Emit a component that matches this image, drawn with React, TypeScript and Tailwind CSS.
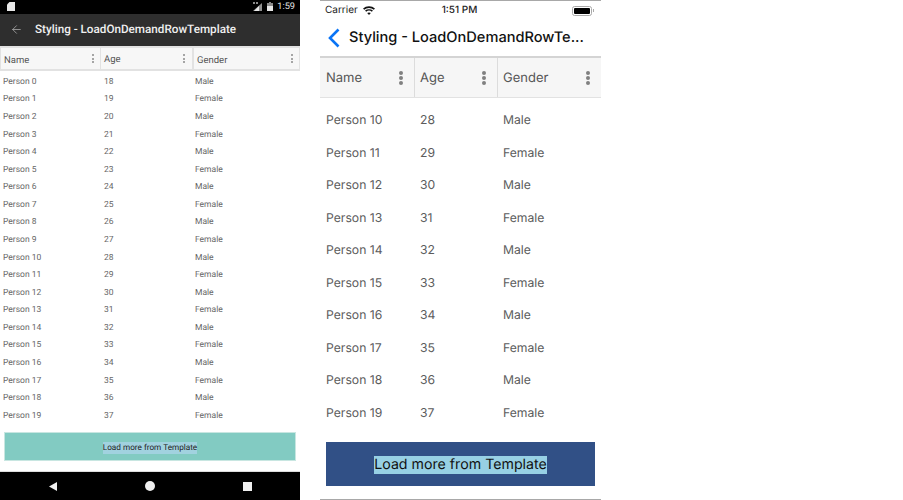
import React from "react";
import { ArrowLeft } from "lucide-react";

const androidRows = Array.from({ length: 20 }, (_, i) => ({
  name: `Person ${i}`,
  age: 18 + i,
  gender: i % 2 === 0 ? "Male" : "Female",
}));

const iosRows = androidRows.slice(10);

const Dots = () => (
  <div className="flex h-[9px] flex-col items-center justify-between">
    <span className="block h-[2px] w-[2px] rounded-full bg-[#8a8a8a]" />
    <span className="block h-[2px] w-[2px] rounded-full bg-[#8a8a8a]" />
    <span className="block h-[2px] w-[2px] rounded-full bg-[#8a8a8a]" />
  </div>
);

const IosDots = () => (
  <div className="flex h-[14px] flex-col items-center justify-between">
    <span className="block h-[4px] w-[4px] rounded-full bg-[#808080]" />
    <span className="block h-[4px] w-[4px] rounded-full bg-[#808080]" />
    <span className="block h-[4px] w-[4px] rounded-full bg-[#808080]" />
  </div>
);

const AndroidPhone = () => (
  <div className="flex h-[500px] w-[300px] flex-col bg-white font-['Roboto',sans-serif] [text-rendering:geometricPrecision]">
    {/* Status bar */}
    <div className="flex h-[14px] items-center justify-between bg-black pl-[7px] pr-[5px]">
      <svg width="8" height="9" viewBox="0 0 8 9">
        <path d="M2.5 0H8v9H0V2.5z" fill="#e8e8e8" />
      </svg>
      <div className="flex items-center">
        <svg width="9" height="9" viewBox="0 0 9 9">
          <path d="M0 0h2v2H0zM3 0h2v2H3z" fill="#8a8a8a" />
          <path d="M9 1v8H0z" fill="#8f8f8f" />
          <path d="M6 4v5H1z" fill="#e6e6e6" />
        </svg>
        <svg className="ml-[5px]" width="6" height="9" viewBox="0 0 6 9">
          <path d="M2 0h2v1h2v8H0V1h2z" fill="#8a8a8a" />
          <path d="M0 4h6v5H0z" fill="#e6e6e6" />
        </svg>
        <span className="ml-[4px] text-[9.2px] leading-none text-[#e4e4e4]">1:59</span>
      </div>
    </div>
    {/* App bar */}
    <div className="flex h-[33px] items-center bg-[#2e2e2e] pl-[10px]">
      <ArrowLeft size={13} strokeWidth={1.5} color="#a8a8a8" />
      <span className="ml-[12px] text-[11.7px] font-medium text-[#f0f0f0]">
        Styling - LoadOnDemandRowTemplate
      </span>
    </div>
    {/* Header */}
    <div className="grid h-[25px] grid-cols-[101px_93px_106px] border-y-2 border-[#e2e2e2] bg-[#f7f7f7] text-[9.5px] text-[#555]">
      <div className="flex items-center justify-between border-x border-[#e2e2e2] pl-[3px] pr-[6px]">
        <span className="translate-y-[3px]">Name</span>
        <Dots />
      </div>
      <div className="flex items-center justify-between border-r-2 border-[#e2e2e2] pl-[3px] pr-[7px]">
        <span className="translate-y-[2px]">Age</span>
        <Dots />
      </div>
      <div className="flex items-center justify-between border-r border-[#e2e2e2] pl-[3px] pr-[6px]">
        <span className="translate-y-[3px]">Gender</span>
        <Dots />
      </div>
    </div>
    {/* Rows */}
    <div className="flex flex-col pt-[1.5px] text-[8.5px] text-[#666]">
      {androidRows.map((row) => (
        <div key={row.name} className="grid h-[17.58px] grid-cols-[101px_91px_105px] items-center pl-[3px]">
          <span className="translate-y-[1px]">{row.name}</span>
          <span className="translate-y-[1px]">{row.age}</span>
          <span className="translate-y-[1px]">{row.gender}</span>
        </div>
      ))}
    </div>
    <div className="mx-[4px] mt-[8px] flex h-[30px] items-center justify-center border border-[#c8e6e1] bg-[#82cbc2]">
      <span className="translate-y-[1px] bg-[#a1d2df] text-[8.2px] leading-[12px] text-[#222]">
        Load more from Template
      </span>
    </div>
    <div className="mt-[10px] flex h-[29px] items-center justify-between border-t border-[#ddd] bg-black pl-[49px] pr-[48px]">
      <svg width="8" height="9" viewBox="0 0 8 9">
        <path d="M8 0v9L0 4.5z" fill="#f0f0f0" />
      </svg>
      <span className="block h-[10px] w-[10px] rounded-full bg-[#f0f0f0]" />
      <span className="block h-[9px] w-[9px] bg-[#f0f0f0]" />
    </div>
  </div>
);

const IosPhone = () => (
  <div className="flex h-[500px] w-[281px] flex-col border-y border-[#a8a8a8] bg-white font-['Inter','Liberation_Sans',sans-serif] [text-rendering:geometricPrecision]">
    {/* Status bar */}
    <div className="grid h-[19px] grid-cols-3 items-center pl-[5px] pr-[7px] text-[10px] text-[#222]">
      <div className="flex items-center gap-[5px]">
        <span>Carrier</span>
        <svg width="12" height="9" viewBox="0 0 12 9" fill="none" stroke="#111" strokeWidth="1.6">
          <path d="M.6 3.2c3-2.8 7.8-2.8 10.8 0" />
          <path d="M2.6 5.2c1.9-1.7 4.9-1.7 6.8 0" />
          <path d="M6 9 4.2 7.1c1-.9 2.6-.9 3.6 0z" fill="#111" stroke="none" />
        </svg>
      </div>
      <span className="text-center font-medium">1:51 PM</span>
      <div className="flex items-center justify-end">
        <div className="flex h-[10px] w-[20px] items-center rounded-[2.5px] border border-[#aaa] p-[1px]">
          <div className="h-full w-full rounded-[1px] bg-black" />
        </div>
        <span className="ml-[0.5px] block h-[3px] w-[1px] bg-[#aaa]" />
      </div>
    </div>
    {/* Nav bar */}
    <div className="flex h-[38px] items-center border-b-2 border-[#d4d4d4]">
      <svg className="ml-[7px]" width="13" height="20" viewBox="0 0 13 20" fill="none">
        <path d="M11.5 1.5 3 10l8.5 8.5" stroke="#0a74f5" strokeWidth="2.6" />
      </svg>
      <span className="ml-[9px] text-[14.6px] font-medium text-[#111]">Styling - LoadOnDemandRowTe...</span>
    </div>
    {/* Header */}
    <div className="grid h-[40px] grid-cols-[95px_83px_103px] border-b border-[#e2e2e2] bg-[#f6f6f6] text-[13px] text-[#555]">
      <div className="flex items-center justify-between border-r border-[#dcdcdc] pl-[6px] pr-[11px]">
        <span className="translate-y-[1px]">Name</span>
        <IosDots />
      </div>
      <div className="flex items-center justify-between border-r border-[#dcdcdc] pl-[5px] pr-[11px]">
        <span className="translate-y-[1px]">Age</span>
        <IosDots />
      </div>
      <div className="flex items-center justify-between pl-[5px] pr-[11px]">
        <span className="translate-y-[1px]">Gender</span>
        <IosDots />
      </div>
    </div>
    {/* Rows */}
    <div className="flex flex-col pt-[6px] text-[12.2px] text-[#5c5c5c]">
      {iosRows.map((row) => (
        <div key={row.name} className="grid h-[32.5px] grid-cols-[94px_83px_104px] items-center pl-[6px]">
          <span>{row.name}</span>
          <span>{row.age}</span>
          <span>{row.gender}</span>
        </div>
      ))}
    </div>
    <div className="mx-[6px] mt-[13px] flex h-[44px] items-center justify-center bg-[#315086]">
      <span className="translate-y-[1px] bg-[#97d0e4] text-[14.2px] leading-[18px] text-[#111]">
        Load more from Template
      </span>
    </div>
  </div>
);

export default function App() {
  return (
    <div className="flex h-[500px] w-[903px] gap-[20px] overflow-hidden bg-white">
      <AndroidPhone />
      <IosPhone />
    </div>
  );
}
